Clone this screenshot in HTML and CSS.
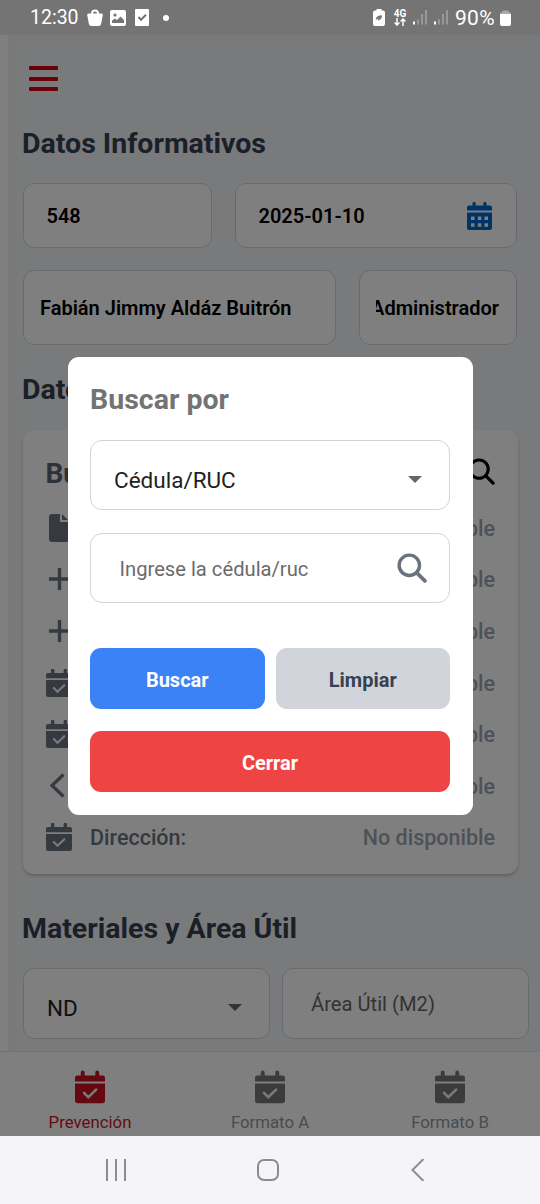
FILE: index.html
```html
<!DOCTYPE html>
<html lang="es">
<head>
<meta charset="utf-8">
<title>Datos Informativos</title>
<link rel="stylesheet" href="styles.css">
</head>
<body>
<svg width="0" height="0" class="defs">
  <defs>
    <symbol id="cal-check" viewBox="0 0 26 28"><path d="M2 4h3V1.500a1.700 1.700 0 0 1 3.400 0V4h9.200V1.500a1.700 1.700 0 0 1 3.400 0V4h3q2 0 2 2v3.200H0V6q0-2 2-2zM0 11h26v15q0 2-2 2H2q-2 0-2-2z"/><path d="M7.800 19l3.700 3.800 6.800-6.600" fill="none" stroke="#f4f4f4" stroke-width="2.200" stroke-linecap="round"/></symbol>
    <symbol id="cal-days" viewBox="0 0 25 28"><path fill-rule="evenodd" d="M2 3.500h3.500V1.500a1.600 1.600 0 0 1 3.200 0v2h7.600v-2a1.600 1.600 0 0 1 3.200 0v2H23q2 0 2 2v3H0v-3q0-2 2-2zM0 10.500h25V26q0 2-2 2H2q-2 0-2-2zM4 14.500V18h3.500v-3.500zM10.800 14.500V18h3.500v-3.500zM17.500 14.500V18H21v-3.500zM4 21.300v3.500h3.500v-3.500zM10.800 21.300v3.500h3.500v-3.500zM17.500 21.300v3.500H21v-3.500z"/></symbol>
    <symbol id="search" viewBox="0 0 28 28"><circle cx="11.500" cy="11.500" r="9.500" fill="none" stroke="currentColor" stroke-width="3.200"/><path d="M18.500 18.500l7.500 7.500" stroke="currentColor" stroke-width="3.500" stroke-linecap="round"/></symbol>
    <symbol id="plus" viewBox="0 0 26 28"><path d="M3 14h21M13.500 3v22" stroke="currentColor" stroke-width="3.400"/></symbol>
    <symbol id="signal" viewBox="0 0 14 15"><rect x="0" y="11.500" width="2" height="3" fill="#fff"/><path d="M5 14.500V9.500M9 14.500V4M13 14.500V0" stroke="#a4a4a4" stroke-width="1.500"/></symbol>
  </defs>
</svg>
<div class="phone">
  <header class="status">
    <div class="status-left">
      <span class="clock">12:30</span>
      <svg class="s-bag" width="16" height="17" viewBox="0 0 16 17"><path d="M5 6V4.500a3 3 0 0 1 6 0V6" fill="none" stroke="#fff" stroke-width="2"/><path d="M1.500 4.500h13q1.500 0 1.300 1.500L14.300 14q-.3 3-3 3H4.700q-2.700 0-3-3L.2 6q-.2-1.500 1.300-1.500z" fill="#fff"/></svg>
      <svg class="s-pic" width="16" height="16" viewBox="0 0 16 16"><rect width="16" height="16" rx="2" fill="#fff"/><circle cx="5" cy="5" r="1.600" fill="#747474"/><path d="M2 13v-2.500l3-2 2 1.500 3.500-3.500 3.500 3.500v3z" fill="#747474"/></svg>
      <svg class="s-check" width="14" height="17" viewBox="0 0 14 17"><rect width="14" height="17" rx="1" fill="#fff"/><path d="M3.500 8l2.500 2.700 5-5" fill="none" stroke="#747474" stroke-width="2"/></svg>
      <span class="s-dot"></span>
    </div>
    <div class="status-right">
      <svg width="12" height="17" viewBox="0 0 12 17"><path d="M3.500 1.500V0h5v1.500H10q2 0 2 2V15q0 2-2 2H2q-2 0-2-2V3.500q0-2 2-2z" fill="#fff"/><path d="M3.200 10.500q0-3.500 5.300-3.700 0 4-3.500 4.200l1.500-2" fill="#747474" stroke="#747474"/></svg>
      <div class="net"><span>4G</span><svg width="12" height="8" viewBox="0 0 12 8"><path d="M3 0v7M.6 4.500L3 7l2.400-2.500M9 8V1M6.600 3.500L9 1l2.400 2.500" fill="none" stroke="#fff" stroke-width="1.500"/></svg></div>
      <svg class="sig1" width="14" height="15"><use href="#signal"/></svg>
      <svg class="sig2" width="14" height="15"><use href="#signal"/></svg>
      <span class="pct">90%</span>
      <svg width="11" height="16" viewBox="0 0 11 16"><path d="M2.500 2V.5h6V2q2.500 0 2.500 2H0q0-2 2.500-2z" fill="#aaa"/><path d="M0 4h11v10q0 2-2 2H2q-2 0-2-2z" fill="#fff"/></svg>
    </div>
  </header>

  <div class="screen">
    <main class="content">
      <div class="burger"><i></i><i></i><i></i></div>
      <h2 class="title">Datos Informativos</h2>
      <div class="row row-a">
        <div class="box"><b>548</b></div>
        <div class="box"><b>2025-01-10</b><svg class="date-icon" width="25" height="28"><use href="#cal-days"/></svg></div>
      </div>
      <div class="row row-b">
        <div class="box"><b>Fabián Jimmy Aldáz Buitrón</b></div>
        <div class="box clip"><div><b>Administrador</b></div></div>
      </div>
      <h2 class="title title-b">Datos</h2>
      <section class="card">
        <div class="card-head"><span>Bu</span><svg width="27" height="27"><use href="#search"/></svg></div>
        <div class="item"><svg width="26" height="28" viewBox="0 0 26 28"><path d="M6 0h8v8h9v17q0 3-3 3H6q-3 0-3-3V3q0-3 3-3zM16 0l6 6h-6z"/></svg><span></span><em>No disponible</em></div>
        <div class="item"><svg width="26" height="28"><use href="#plus"/></svg><span></span><em>No disponible</em></div>
        <div class="item"><svg width="26" height="28"><use href="#plus"/></svg><span></span><em>No disponible</em></div>
        <div class="item"><svg width="26" height="28"><use href="#cal-check"/></svg><span></span><em>No disponible</em></div>
        <div class="item"><svg width="26" height="28"><use href="#cal-check"/></svg><span></span><em>No disponible</em></div>
        <div class="item"><svg width="26" height="28" viewBox="0 0 26 28"><path d="M17.500 2.500L6 13.500l11.500 11" fill="none" stroke="currentColor" stroke-width="3.200"/></svg><span></span><em>No disponible</em></div>
        <div class="item"><svg width="26" height="28"><use href="#cal-check"/></svg><span>Dirección:</span><em>No disponible</em></div>
      </section>
      <h2 class="title title-c">Materiales y Área Útil</h2>
      <div class="row row-c">
        <div class="box pick"><span>ND</span><i class="caret"></i></div>
        <div class="box area"><span>Área Útil (M2)</span></div>
      </div>
    </main>
    <nav class="tabs">
      <div class="tab active"><svg width="30" height="34" preserveAspectRatio="none"><use href="#cal-check"/></svg><span>Prevención</span></div>
      <div class="tab"><svg width="30" height="34"><use href="#cal-check"/></svg><span>Formato A</span></div>
      <div class="tab"><svg width="30" height="34"><use href="#cal-check"/></svg><span>Formato B</span></div>
    </nav>

    <div class="overlay">
      <div class="modal">
        <h3>Buscar por</h3>
        <div class="field pick"><span>Cédula/RUC</span><i class="caret"></i></div>
        <div class="field query"><span>Ingrese la cédula/ruc</span><svg width="30" height="30"><use href="#search"/></svg></div>
        <div class="actions">
          <div class="btn blue">Buscar</div>
          <div class="btn gray">Limpiar</div>
        </div>
        <div class="btn red">Cerrar</div>
      </div>
    </div>
  </div>

  <footer class="sysnav">
    <svg width="22" height="22" viewBox="0 0 22 22"><path d="M2 0v22M11 0v22M20 0v22"/></svg>
    <svg width="22" height="22" viewBox="0 0 22 22"><rect x="1" y="1" width="20" height="20" rx="6"/></svg>
    <svg width="22" height="22" viewBox="0 0 22 22"><path d="M15.500 0L4.500 11l11 11"/></svg>
  </footer>
</div>
</body>
</html>
```
FILE: styles.css
```css
* { box-sizing: border-box; }
body { margin: 0; font-family: Roboto, "Liberation Sans", sans-serif; }
.defs { display: block; }
svg { display: block; flex: none; }
.phone { width: 540px; height: 1204px; display: flex; flex-direction: column; overflow: hidden; }

.status { height: 35px; flex: none; background: #747474; color: #fff; display: flex; justify-content: space-between; padding: 0 29px 0 30px; }
.status-left, .status-right { display: flex; align-items: center; }
.clock { font-size: 19.500px; width: 57px; }
.s-pic { margin-left: 7px; }
.s-check { margin-left: 9px; }
.s-dot { width: 6px; height: 6px; border-radius: 50%; background: #fff; margin-left: 14px; }
.net { width: 14px; margin-left: 8px; display: flex; flex-direction: column; align-items: center; font-size: 10px; font-weight: 700; line-height: 9px; }
.sig1 { margin-left: 6px; }
.sig2 { margin-left: 7px; }
.pct { font-size: 21px; width: 42px; letter-spacing: .3px; margin: 0 3px 0 7px; }

.screen { position: relative; height: 1101px; flex: none; display: flex; flex-direction: column; background: #fff; }
.content { height: 1016px; margin-left: 8px; padding: 31px 0 0 15px; background: linear-gradient(90deg, #eef4f0, #f3f4f6 12px); flex: none; overflow: hidden; }
.burger { width: 29px; height: 25px; margin-left: 6px; display: flex; flex-direction: column; justify-content: space-between; }
.burger i { height: 4px; border-radius: 1px; background: #d4000c; }
.title { margin: 34px 0 0 -1px; height: 36px; line-height: 37px; font-size: 28.500px; font-weight: 700; color: #374151; }
.row { display: flex; gap: 23px; width: 494px; }
.box { display: flex; align-items: center; justify-content: space-between; border: 1.500px solid #d1d5db; border-radius: 11px; background: #fff; overflow: hidden; white-space: nowrap; }
.box b { font-size: 20px; font-weight: 600; color: #000; padding-top: 1px; }
.row-a { margin-top: 22px; }
.row-a .box { height: 65px; flex: 0 0 189px; padding: 0 24px 0 22.500px; }
.row-a .box + .box { flex: 0 0 282px; }
.date-icon { fill: #0066cc; }
.row-b { margin-top: 22px; }
.row-b .box { height: 75px; flex: 0 0 313px; padding: 0 16px; }
.row-b .clip { flex: 0 0 158px; }
.clip div { width: 123px; overflow: hidden; display: flex; justify-content: flex-end; }
.title-b { margin-top: 26px; }
.card { width: 495px; height: 444px; margin-top: 23px; padding: 14px 23px 14px 22.500px; background: #fff; border-radius: 11px; box-shadow: 0 2px 3px rgba(0,0,0,.2); }
.card-head { height: 58px; display: flex; align-items: center; justify-content: space-between; font-size: 28px; font-weight: 700; color: #5a6270; }
.card-head svg { color: #000; margin-bottom: 4px; }
.item { height: 51.600px; display: flex; align-items: center; color: #6b7280; fill: #6b7280; font-size: 21.500px; font-weight: 500; }
.item span { margin-left: 18.500px; flex: 1; }
.item em { font-style: normal; color: #9ca3af; padding-top: 1px; }
.title-c { margin-top: 36px; }
.row-c { margin-top: 22px; gap: 12px; width: 506px; }
.row-c .box { height: 71px; flex: 0 0 247px; padding: 0 27px 0 23px; }
.pick span { font-size: 22.500px; color: #222; padding-top: 9px; }
.caret { border: 7px solid transparent; border-top-color: #666; border-bottom: 0; margin-top: 8px; }
.area span { font-size: 20.200px; color: #666; margin-left: 5px; }

.tabs { height: 85px; border-top: 1px solid #e2e4e8; display: flex; background: #fff; flex: none; }
.tab { flex: 1; display: flex; flex-direction: column; align-items: center; padding-top: 18px; fill: #777; color: #9298a3; font-size: 16.800px; }
.tab span { margin-top: 8px; line-height: 20px; }
.tab.active { fill: #cc1020; color: #cc1626; }

.overlay { position: absolute; inset: 0; background: rgba(0,0,0,.5); display: flex; justify-content: center; align-items: flex-start; padding-top: 322px; }
.modal { width: 405px; height: 457.500px; background: #fff; border-radius: 11px; padding: 21px 22.500px; }
.modal h3 { margin: 0; height: 43px; line-height: 43px; font-size: 28.500px; font-weight: 700; color: #737373; }
.field { height: 70px; margin-top: 19px; border: 1.500px solid #d4d4d4; border-radius: 12px; display: flex; align-items: center; justify-content: space-between; padding: 0 27px 0 23px; }
.field.query { margin-top: 23px; padding: 0 22px 0 28.500px; }
.query span { font-size: 20.200px; color: #6b6b6b; padding-top: 1px; }
.query svg { color: #6b7280; }
.actions { display: flex; gap: 11px; margin-top: 45px; }
.btn { flex: 1; height: 61px; border-radius: 11px; display: flex; align-items: center; justify-content: center; font-size: 20px; font-weight: 700; padding-top: 3px; color: #fff; }
.blue { background: #3b82f6; }
.gray { background: #d1d5db; color: #374151; }
.red { background: #ef4444; margin-top: 22px; }

.sysnav { height: 68px; flex: none; background: #f5f5f8; display: grid; grid-template-columns: repeat(3, 151.500px); padding-right: 5px; justify-content: center; justify-items: center; align-items: center; }
.sysnav svg { fill: none; stroke: #8c8c8e; stroke-width: 2; }
```
